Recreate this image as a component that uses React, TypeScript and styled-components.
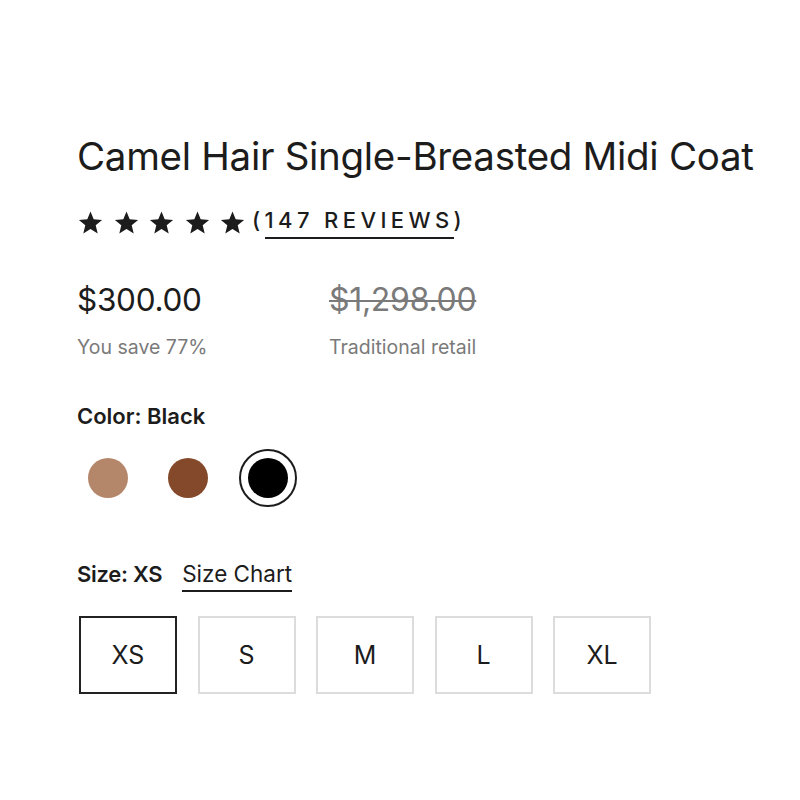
import React from "react";
import styled, { createGlobalStyle } from "styled-components";

const Global = createGlobalStyle`
  html, body { margin: 0; padding: 0; background: #fff; }
  body { font-family: Inter, "Liberation Sans", sans-serif; color: #1a1a1a; }
`;

const Page = styled.div`
  padding: 132px 0 0 77px;
  display: flex;
  flex-direction: column;
`;

const Title = styled.h1`
  margin: 0;
  font-size: 38.5px;
  font-weight: 400;
  line-height: 48px;
  letter-spacing: -0.3px;
  color: #1c1c1c;
`;

const RatingRow = styled.div`
  display: flex;
  align-items: center;
  margin-top: 28px;
  height: 30px;
`;

const Stars = styled.div`
  display: flex;
  gap: 10.5px;
  margin-left: 1px;
`;

const ReviewsLink = styled.a`
  margin-left: 7px;
  font-size: 22px;
  letter-spacing: 4.4px;
  font-weight: 500;
  color: #1c1c1c;
  text-decoration: none;
  display: inline-flex;
`;

const Underlined = styled.span`
  border-bottom: 2px solid #1c1c1c;
  padding-bottom: 4px;
`;

const PriceRow = styled.div`
  display: flex;
  margin-top: 43px;
`;

const PriceCol = styled.div<{ $w: number }>`
  width: ${(p) => p.$w}px;
  display: flex;
  flex-direction: column;
`;

const Price = styled.div<{ $old?: boolean }>`
  font-size: ${(p) => (p.$old ? 32 : 31.5)}px;
  line-height: 38px;
  letter-spacing: -0.3px;
  color: ${(p) => (p.$old ? "#7a7a7a" : "#1c1c1c")};
  text-decoration: ${(p) => (p.$old ? "line-through" : "none")};
  text-decoration-thickness: 2px;
`;

const PriceNote = styled.div`
  margin-top: 16px;
  font-size: 19.5px;
  color: #7a7a7a;
`;

const ColorLabel = styled.div`
  margin-top: 44px;
  font-size: 22px;
  font-weight: 600;
  color: #1c1c1c;
`;

const Swatches = styled.div`
  display: flex;
  align-items: center;
  gap: 22px;
  margin-top: 20px;
  margin-left: 2px;
`;

const Swatch = styled.button<{ $color: string; $selected?: boolean }>`
  width: 58px;
  height: 58px;
  border-radius: 50%;
  padding: 0;
  background: transparent;
  border: 2px solid ${(p) => (p.$selected ? "#1c1c1c" : "transparent")};
  display: flex;
  align-items: center;
  justify-content: center;
  cursor: pointer;
  &::after {
    content: "";
    width: 40px;
    height: 40px;
    border-radius: 50%;
    background: ${(p) => p.$color};
  }
`;

const SizeHeader = styled.div`
  display: flex;
  align-items: baseline;
  gap: 20px;
  margin-top: 53px;
`;

const SizeLabel = styled.span`
  font-size: 22px;
  font-weight: 600;
  letter-spacing: -0.3px;
  color: #1c1c1c;
`;

const SizeChart = styled.a`
  font-size: 22.5px;
  color: #1c1c1c;
  text-decoration: none;
  border-bottom: 2px solid #1c1c1c;
  padding-bottom: 3px;
`;

const SizeGrid = styled.div`
  display: flex;
  gap: 20.5px;
  margin-top: 24px;
  margin-left: 2px;
`;

const SizeBox = styled.button<{ $selected?: boolean }>`
  width: 98px;
  height: 78px;
  box-sizing: border-box;
  background: #fff;
  border: ${(p) => (p.$selected ? "2px solid #222" : "2px solid #dcdcdc")};
  font-family: inherit;
  font-size: 25px;
  color: #1c1c1c;
  display: flex;
  align-items: center;
  justify-content: center;
  padding: 0;
`;

const Star = () => (
  <svg width="25" height="24" viewBox="0 0 25 24">
    <path
      d="M12.5 0.5l3.2 7.8 8.4.6-6.4 5.4 2 8.2-7.2-4.4-7.2 4.4 2-8.2L.9 8.9l8.4-.6z"
      fill="#1c1c1c"
    />
  </svg>
);

export default function App() {
  const sizes = ["XS", "S", "M", "L", "XL"];
  return (
    <>
      <Global />
      <Page>
        <Title>Camel Hair Single-Breasted Midi Coat</Title>
        <RatingRow>
          <Stars>
            {[0, 1, 2, 3, 4].map((i) => (
              <Star key={i} />
            ))}
          </Stars>
          <ReviewsLink href="#">
            (<Underlined>147 REVIEWS</Underlined>)
          </ReviewsLink>
        </RatingRow>
        <PriceRow>
          <PriceCol $w={252}>
            <Price>$300.00</Price>
            <PriceNote>You save 77%</PriceNote>
          </PriceCol>
          <PriceCol $w={200}>
            <Price $old>$1,298.00</Price>
            <PriceNote>Traditional retail</PriceNote>
          </PriceCol>
        </PriceRow>
        <ColorLabel>Color: Black</ColorLabel>
        <Swatches>
          <Swatch $color="#b5876a" aria-label="Camel" />
          <Swatch $color="#84492a" aria-label="Brown" />
          <Swatch $color="#000" $selected aria-label="Black" />
        </Swatches>
        <SizeHeader>
          <SizeLabel>Size: XS</SizeLabel>
          <SizeChart href="#">Size Chart</SizeChart>
        </SizeHeader>
        <SizeGrid>
          {sizes.map((s, i) => (
            <SizeBox key={s} $selected={i === 0}>
              {s}
            </SizeBox>
          ))}
        </SizeGrid>
      </Page>
    </>
  );
}
